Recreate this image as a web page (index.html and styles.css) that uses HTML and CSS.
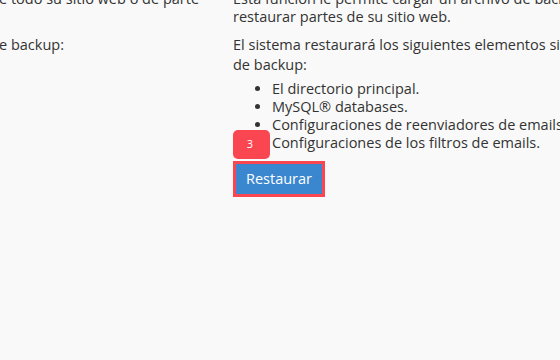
FILE: index.html
```html
<!DOCTYPE html>
<html lang="es">
<head>
<meta charset="utf-8">
<link rel="stylesheet" href="styles.css">
</head>
<body>
<div class="page">
  <div class="row intro">
    <div class="label">e todo su sitio web o de parte</div>
    <div class="value">
      <p>Esta función le permite cargar un archivo de backup completo o<br>restaurar partes de su sitio web.</p>
    </div>
  </div>
  <div class="row">
    <div class="label">e backup:</div>
    <div class="value">
      <p>El sistema restaurará los siguientes elementos si carga un archivo<br>de backup:</p>
      <ul class="items">
        <li>El directorio principal.</li>
        <li>MySQL® databases.</li>
        <li>Configuraciones de reenviadores de emails.</li>
        <li class="marked"><span class="badge">3</span>Configuraciones de los filtros de emails.</li>
      </ul>
      <div class="actions">
        <button class="btn">Restaurar</button>
      </div>
    </div>
  </div>
</div>
</body>
</html>
```

FILE: styles.css
```css
html, body {
  margin: 0;
  padding: 0;
  background: #f9f9f9;
}
body {
  font-family: "Open Sans", "Noto Sans", sans-serif;
  font-size: 14.5px;
  line-height: 20px;
  color: #333;
  overflow: hidden;
  width: 560px;
  height: 360px;
}
.page {
  margin-top: -10px;
}
.row {
  display: flex;
  margin-bottom: 5px;
}
.row.intro {
  line-height: 18px;
  margin-bottom: 4px;
}
.label {
  width: 234px;
  flex: none;
  white-space: nowrap;
  margin-left: -1px;
}
.value {
  width: 400px;
  flex: none;
  white-space: nowrap;
}
.value p {
  margin: 0 0 5px;
}
.items {
  margin: 0 0 9px;
  padding-left: 39px;
}
.items li {
  line-height: 18px;
}
.marked {
  position: relative;
}
.badge {
  position: absolute;
  left: -39px;
  top: -4px;
  width: 37px;
  height: 29px;
  background: #fa4650;
  border-radius: 5px;
  color: #fff;
  font-size: 11px;
  line-height: 28px;
  text-align: center;
  padding-right: 3px;
  box-sizing: border-box;
}
.actions {
  display: inline-flex;
  border: 3px solid #fa4650;
}
.btn {
  font-family: inherit;
  font-size: 14.5px;
  line-height: 20px;
  color: #fff;
  background: #3a86cf;
  border: 0;
  padding: 5px 10px 5px;
  margin: 0;
  border-radius: 0;
}
```
